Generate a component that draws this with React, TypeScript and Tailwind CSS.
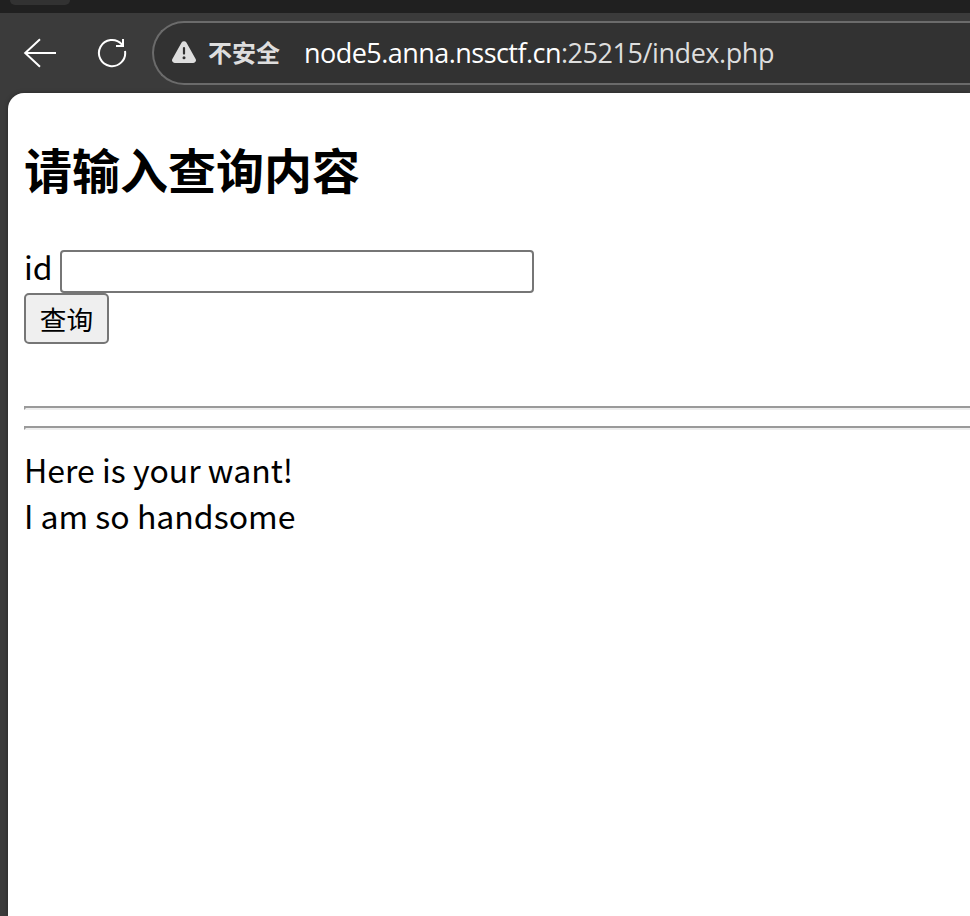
function BackIcon() {
  return (
    <svg width="34" height="30" viewBox="0 0 34 30" fill="none" stroke="#fff" strokeWidth="2" className="shrink-0">
      <path d="M33 15H2M17 1.3L2.2 15L17 28.7" />
    </svg>
  );
}

function ReloadIcon() {
  return (
    <svg width="30" height="30" viewBox="0 0 30 30" fill="none" stroke="#fff" strokeWidth="2" className="shrink-0">
      <path d="M28 13A13.1 13.1 0 1 1 24.7 6.2L26 8" />
      <path d="M26 1V8H19" />
    </svg>
  );
}

function WarningIcon() {
  return (
    <svg width="24" height="22" viewBox="0 0 24 22" className="mb-[2px] shrink-0">
      <path d="M9.6 1.6a2.75 2.75 0 0 1 4.8 0l9.1 16.1a2.7 2.7 0 0 1-2.4 4.2H2.9a2.7 2.7 0 0 1-2.4-4.2z" fill="#dedede" />
      <path d="M12 7v5.6" stroke="#323232" strokeWidth="2.2" strokeLinecap="round" />
      <circle cx="12" cy="16.8" r="1.5" fill="#323232" />
    </svg>
  );
}

function Toolbar() {
  return (
    <div className="flex h-20 items-center">
      <div className="ml-[23px]">
        <BackIcon />
      </div>
      <div className="ml-10">
        <ReloadIcon />
      </div>
      <div className="ml-[25px] flex h-16 flex-1 items-center rounded-l-full border-2 border-r-0 border-[#6b6b6b] bg-[#323232] pl-[18px]">
        <WarningIcon />
        <span className="mb-[2px] ml-3 w-24 shrink-0 font-['Noto_Sans_CJK_SC',sans-serif] text-2xl font-bold text-[#dedede]">
          不安全
        </span>
        <span className="font-['Open_Sans',sans-serif] text-[27px] tracking-[-0.44px] whitespace-nowrap text-[#dedede]">
          <span className="tracking-[-0.54px] text-white">node5.anna.nssctf.cn</span>:25215/index.php
        </span>
      </div>
    </div>
  );
}

export default function App() {
  return (
    <div className="flex h-[916px] w-[970px] flex-col overflow-hidden bg-[#3b3b3b]">
      <div className="h-[13px] bg-[#202020] pl-[10px]">
        <div className="h-[5px] w-[60px] rounded-b-[14px] bg-[#323232]" />
      </div>
      <Toolbar />
      <main className="ml-2 flex-1 rounded-tl-2xl bg-white pl-4 font-['Noto_Sans_CJK_SC',sans-serif] text-[32px] leading-[46px] text-black shadow-[0_0_4px_rgba(0,0,0,0.35)]">
        <h2 className="pt-10 text-5xl leading-[70px] font-bold">请输入查询内容</h2>
        <form className="mt-[42px]" onSubmit={(e) => e.preventDefault()}>
          <div className="flex h-[48px] items-start">
            <label htmlFor="id" className="w-9 leading-[42px]">
              id
            </label>
            <input
              id="id"
              type="text"
              className="mt-[5px] h-[43px] w-[474px] rounded-[4px] border-2 border-[#767676] bg-white px-1 text-[26px] outline-none"
            />
          </div>
          <button className="flex h-[51px] w-[85px] items-center justify-center rounded-[5px] border-2 border-[#767676] bg-[#efefef] pt-[2px] text-[26.67px] leading-none">
            查询
          </button>
        </form>
        <hr className="mt-[62px] h-1 border-2 border-r-0 border-t-[#9a9a9a] border-b-[#eeeeee] border-l-[#9a9a9a]" />
        <hr className="mt-4 h-1 border-2 border-r-0 border-t-[#9a9a9a] border-b-[#eeeeee] border-l-[#9a9a9a]" />
        <p className="mt-4">
          Here is your want!
          <br />I am so handsome
        </p>
      </main>
    </div>
  );
}
